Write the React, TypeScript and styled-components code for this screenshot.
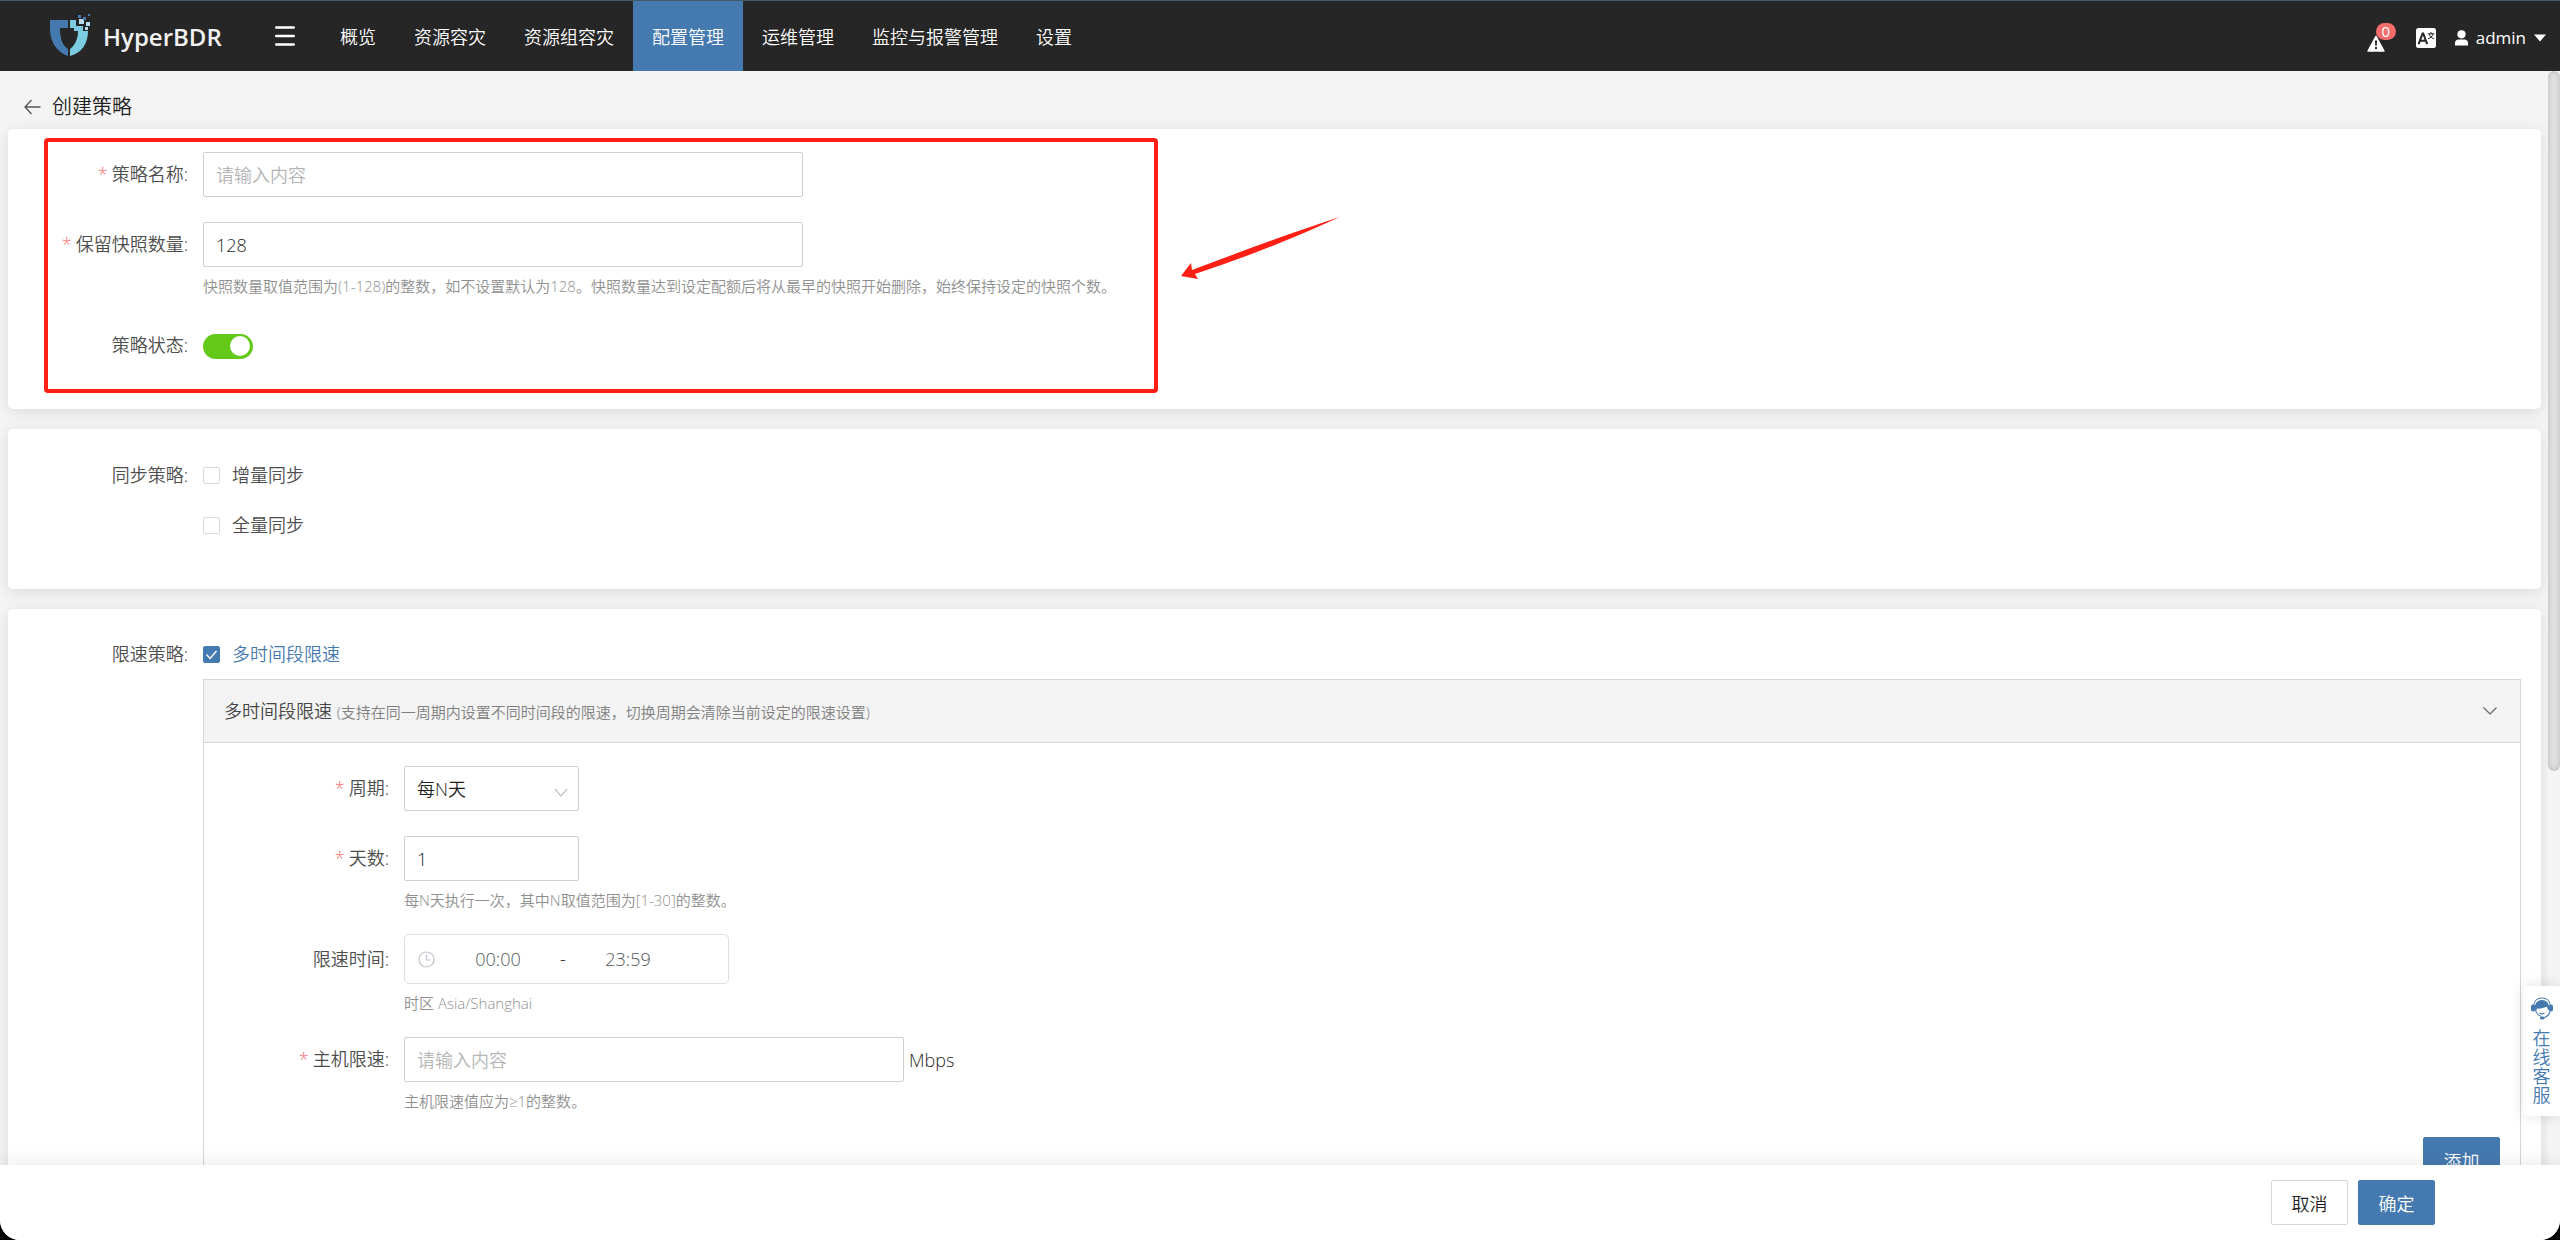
import React, { useState } from "react";
import styled, { createGlobalStyle } from "styled-components";

const color = {
  primary: "#457ab0",
  header: "#262626",
  page: "#f4f4f4",
  text: "#1f1f1f",
  label: "#4d4d4d",
  hint: "#8f8f8f",
  placeholder: "#b5b5b5",
  border: "#cfcfcf",
  line: "#d6d6d6",
  danger: "#f56c6c",
  mark: "#ff1f14",
};

const GlobalStyle = createGlobalStyle`
  *, *::before, *::after { box-sizing: border-box; }
  body {
    margin: 0;
    background: #000;
    color: ${color.text};
    font-family: "Open Sans", "Noto Sans CJK SC", sans-serif;
    font-size: 18px;
    font-weight: 350;
  }
  button, input, select { font: inherit; color: inherit; }
`;

const Shell = styled.div`
  position: relative;
  display: flex;
  flex-direction: column;
  height: 100vh;
  overflow: hidden;
  background: ${color.page};
  border-radius: 0 0 20px 20px;
`;

/* ---------- header ---------- */

const Header = styled.header`
  display: flex;
  align-items: stretch;
  flex: none;
  height: 71px;
  padding: 0 14px 0 48px;
  background: ${color.header};
  border-top: 1px solid #455a64;
  color: #fff;
`;

const Brand = styled.a`
  display: flex;
  align-items: center;
  gap: 9px;
  width: 227px;
  color: #f2f2f2;
  font-size: 24px;
  font-weight: 600;
  text-decoration: none;
`;

const MenuButton = styled.button`
  display: flex;
  align-items: center;
  width: 46px;
  padding: 0;
  background: none;
  border: 0;
`;

const Nav = styled.nav`
  display: flex;
  flex: 1;
`;

const NavLink = styled.a<{ $active?: boolean }>`
  display: flex;
  align-items: center;
  padding: 0 19px;
  background: ${(p) => (p.$active ? color.primary : "transparent")};
  color: #fff;
  text-decoration: none;
`;

const Tools = styled.div`
  display: flex;
  align-items: center;
  gap: 19px;
`;

const ToolButton = styled.button`
  position: relative;
  display: flex;
  align-items: center;
  gap: 8px;
  padding: 4px 0 0;
  background: none;
  border: 0;
  font-size: 17px;
  font-weight: 400;
  line-height: 24px;
`;

const AlarmButton = styled(ToolButton)`
  width: 30px;
  padding-top: 14px;
`;

const Badge = styled.span`
  position: absolute;
  top: 2px;
  left: 9px;
  width: 20px;
  height: 17px;
  border-radius: 9px;
  background: ${color.danger};
  font-size: 15px;
  line-height: 17px;
  text-align: center;
`;

/* ---------- body ---------- */

const Main = styled.main`
  display: flex;
  flex: 1;
  min-height: 0;
`;

const Content = styled.div`
  flex: 1;
  min-width: 0;
  overflow: hidden;
  padding: 0 7px 0 8px;
`;

const ScrollTrack = styled.div`
  flex: none;
  width: 12px;
`;

const ScrollThumb = styled.div`
  height: 64%;
  border-radius: 6px;
  background: #e2e2e2;
  box-shadow: inset 0 0 6px rgba(0, 0, 0, 0.2);
`;

const TitleBar = styled.div`
  display: flex;
  align-items: center;
  gap: 11px;
  height: 58px;
  padding: 13px 0 0 16px;
`;

const BackButton = styled.button`
  display: flex;
  padding: 0;
  background: none;
  border: 0;
`;

const Title = styled.h1`
  margin: 0;
  font-size: 20px;
  font-weight: 350;
  line-height: 28px;
`;

const Cards = styled.div`
  display: flex;
  flex-direction: column;
  gap: 20px;
`;

const Card = styled.section<{ $top?: number }>`
  position: relative;
  padding: ${(p) => p.$top ?? 21}px 20px 39px 0;
  border-radius: 5px;
  background: #fff;
  box-shadow: 0 3px 15px rgba(0, 0, 0, 0.1);
`;

const FormRow = styled.div`
  display: flex;
  align-items: flex-start;

  & + & {
    margin-top: 25px;
  }
`;

const Label = styled.label<{ $h?: number; $w?: number }>`
  flex: none;
  width: ${(p) => p.$w ?? 195}px;
  padding-right: 15px;
  color: ${color.label};
  line-height: ${(p) => p.$h ?? 45}px;
  text-align: right;
`;

const Star = styled.span`
  margin-right: 4px;
  color: ${color.danger};
`;

const Field = styled.div`
  display: flex;
  flex-direction: column;
  align-items: flex-start;
`;

const Inline = styled.div`
  display: flex;
  align-items: center;
  gap: 5px;
`;

const TextInput = styled.input<{ $w: number }>`
  width: ${(p) => p.$w}px;
  height: 45px;
  padding: 0 12px;
  background: #fff;
  border: 1px solid ${color.border};
  border-radius: 2px;

  &::placeholder {
    color: ${color.placeholder};
  }
`;

const Hint = styled.p`
  margin: 10px 0 0;
  color: ${color.hint};
  font-size: 15px;
  line-height: 18px;
`;

const SwitchLine = styled.div`
  display: flex;
  align-items: center;
  height: 50px;
`;

const Switch = styled.input`
  appearance: none;
  display: flex;
  align-items: center;
  width: 50px;
  height: 25px;
  margin: 2px 0 0;
  padding: 0 3px;
  border-radius: 13px;
  background: #bfbfbf;

  &::before {
    content: "";
    width: 20px;
    height: 20px;
    border-radius: 10px;
    background: #fff;
  }

  &:checked {
    justify-content: flex-end;
    background: #64c818;
  }
`;

const CheckLabel = styled.label<{ $on: boolean; $h?: number }>`
  display: flex;
  align-items: center;
  gap: 12px;
  line-height: ${(p) => p.$h ?? 50}px;
  color: ${(p) => (p.$on ? color.primary : color.label)};
`;

const CheckBox = styled.span`
  position: relative;
  display: flex;
  width: 17px;
  height: 17px;
`;

const CheckInput = styled.input`
  appearance: none;
  width: 17px;
  height: 17px;
  margin: 0;
  background: #fff;
  border: 1px solid #d9d9d9;
  border-radius: 2px;

  &:checked {
    background: ${color.primary};
    border-color: ${color.primary};
  }
`;

const CheckMark = styled.svg`
  position: absolute;
  inset: 0;
  pointer-events: none;
`;

const Panel = styled.div`
  margin-left: 195px;
  border: 1px solid ${color.line};
`;

const PanelHead = styled.div`
  display: flex;
  align-items: center;
  height: 63px;
  padding: 0 23px 0 20px;
  background: #f3f3f3;
  border-bottom: 1px solid ${color.line};
`;

const PanelTitle = styled.div`
  flex: 1;
  color: #454545;
  line-height: 62px;
`;

const PanelNote = styled.span`
  color: #808080;
  font-size: 15px;
`;

const PanelBody = styled.div`
  padding: 23px 20px 20px 0;
`;

const PanelActions = styled.div`
  display: flex;
  justify-content: flex-end;
  margin-top: 27px;
`;

const SelectWrap = styled.div`
  position: relative;
  width: 175px;
`;

const SelectBox = styled.select`
  appearance: none;
  width: 100%;
  height: 45px;
  padding: 0 12px;
  background: #fff;
  border: 1px solid ${color.border};
  border-radius: 2px;
`;

const SelectArrow = styled.svg`
  position: absolute;
  top: 22px;
  right: 11px;
  pointer-events: none;
`;

const TimeRange = styled.div`
  display: flex;
  align-items: center;
  width: 325px;
  height: 50px;
  padding: 0 13px;
  border: 1px solid #dcdfe6;
  border-radius: 5px;
  background: #fff;
`;

const TimeInput = styled.input`
  width: 120px;
  height: 40px;
  padding: 0;
  border: 0;
  background: none;
  color: #54565a;
  text-align: center;

  &:first-of-type {
    margin-left: 3px;
  }
`;

const Dash = styled.span`
  width: 10px;
  text-align: center;
`;

const Button = styled.button<{ $primary?: boolean }>`
  width: 77px;
  height: 45px;
  padding: 0;
  background: ${(p) => (p.$primary ? color.primary : "#fff")};
  border: 1px solid ${(p) => (p.$primary ? color.primary : color.line)};
  border-radius: 2px;
  color: ${(p) => (p.$primary ? "#fff" : color.text)};
`;

const Footer = styled.footer`
  position: relative;
  display: flex;
  flex: none;
  align-items: center;
  justify-content: flex-end;
  gap: 10px;
  height: 75px;
  padding-right: 125px;
  background: #fff;
  box-shadow: 0 0 20px rgba(0, 0, 0, 0.1);
`;

/* ---------- overlays ---------- */

const Highlight = styled.div`
  position: absolute;
  top: 9px;
  left: 36px;
  width: 1114px;
  height: 255px;
  border: 4px solid ${color.mark};
  border-radius: 4px;
  pointer-events: none;
`;

const Pointer = styled.svg`
  position: absolute;
  top: 86px;
  left: 1172px;
  pointer-events: none;
`;

const ServiceTab = styled.button`
  position: absolute;
  right: 0;
  bottom: 124px;
  display: flex;
  flex-direction: column;
  align-items: center;
  gap: 9px;
  width: 37px;
  height: 130px;
  padding: 11px 0 0;
  background: #fff;
  border: 0;
  border-radius: 5px 0 0 5px;
  box-shadow: 0 0 15px rgba(0, 0, 0, 0.12);
  color: ${color.primary};
`;

const ServiceText = styled.span`
  width: 18px;
  line-height: 19px;
`;

/* ---------- drawings ---------- */

const ShieldLogo = () => (
  <svg width="46" height="46" viewBox="0 0 46 46" aria-hidden="true">
    <path fill="#457ab0" d="M2 7h18v8h-8c0 10 2 17 8 21v7C8 39 2 28 2 16z" />
    <path fill="#7ccbe0" d="M22 7h6v6h7v5h5c0 12-6 22-18 25v-7c5-4 8-10 8-18h-4v-3h-4z" />
    <path fill="#b9dcec" d="M31 6h5v5h-5zM38 9h4v4h-4zM37 14h3v3h-3z" />
    <path fill="#457ab0" d="M30 2h3v3h-3zM35 4h3v3h-3zM40 1h2v2h-2z" />
  </svg>
);

const MenuIcon = () => (
  <svg width="20" height="20" viewBox="0 0 20 20" aria-hidden="true">
    <path stroke="#fff" strokeWidth="2.4" strokeLinecap="round" d="M1.2 1.5h17.6M1.2 10h17.6M1.2 18.5h17.6" />
  </svg>
);

const AlarmIcon = () => (
  <svg width="18" height="17" viewBox="0 0 18 17" aria-hidden="true">
    <path fill="#fff" stroke="#fff" strokeWidth="1.4" strokeLinejoin="round" d="M9 1.4 17 16H1z" />
    <path fill={color.header} d="M7.9 5.5h2.2l-.4 5.2H8.300zM8 12h2v2H8z" />
  </svg>
);

const LanguageIcon = () => (
  <svg width="20" height="20" viewBox="0 0 20 20" fill="none" aria-hidden="true">
    <rect width="20" height="20" rx="2.500" fill="#fff" />
    <path stroke={color.header} strokeWidth="2" d="M2.600 16.200 6.600 5.500h.6l4 10.700M4.200 12.700h5.500" />
    <path stroke={color.header} strokeWidth="1" d="M11.800 5.800h6.600M15 4v1.800M17 5.800c-.5 2.500-2.400 4.200-5 5M13.200 5.800c.6 2.500 2.500 4.200 5 5" />
  </svg>
);

const UserIcon = () => (
  <svg width="13" height="16" viewBox="0 0 13 16" fill="#fff" aria-hidden="true">
    <circle cx="6.500" cy="4.300" r="4.100" />
    <path d="M0 15.500v-2.500c0-2 1.500-3.500 3.500-3.500h6c2 0 3.500 1.500 3.500 3.500v2.500z" />
  </svg>
);

const CaretIcon = () => (
  <svg width="12" height="8" viewBox="0 0 12 8" aria-hidden="true">
    <path fill="#fff" d="M0 .5h12L6 7.500z" />
  </svg>
);

const BackIcon = () => (
  <svg width="17" height="16" viewBox="0 0 17 16" fill="none" aria-hidden="true">
    <path stroke="#555" strokeWidth="1.300" d="M16.500 8H1M7.500 1 1 8l6.500 7" />
  </svg>
);

const ChevronIcon = () => (
  <svg width="14" height="8" viewBox="0 0 14 8" fill="none" aria-hidden="true">
    <path stroke="#666" strokeWidth="1.200" d="m.5.5 6.500 6.500L13.500.5" />
  </svg>
);

const ClockIcon = () => (
  <svg width="17" height="17" viewBox="0 0 17 17" fill="none" stroke="#c0c4cc" strokeWidth="1.200" aria-hidden="true">
    <circle cx="8.500" cy="8.500" r="7.500" />
    <path d="M8.500 4v5h4" />
  </svg>
);

const AgentIcon = () => (
  <svg width="22" height="23" viewBox="0 0 22 23" aria-hidden="true">
    <path fill="none" stroke={color.primary} strokeWidth="1.200" d="M2.500 9C3 4 6.500 1 11 1s8 3 8.500 8" />
    <path fill={color.primary} d="M4 12c-.8-5.500 2.500-9 7-9s7.800 3.500 7 9l-1 1.500c-.2-2-.8-3-1.600-4C13.500 11 9 12 6 11.500L5 14z" />
    <rect x="0" y="7.500" width="4.200" height="7" rx="2" fill={color.primary} />
    <rect x="17.800" y="7.500" width="4.200" height="7" rx="2" fill={color.primary} />
    <path fill="none" stroke={color.primary} strokeWidth="1.100" d="M4.500 13c.8 3.500 3 5.500 5.500 6.200M19 14.500c-1 3.500-3.500 5.800-7 6.500M8.500 16c1.600 1.200 3.400 1.200 5 0" />
    <rect x="9" y="19.500" width="4.500" height="3" rx="1.500" fill={color.primary} />
  </svg>
);

/* ---------- parts ---------- */

const navItems = ["概览", "资源容灾", "资源组容灾", "配置管理", "运维管理", "监控与报警管理", "设置"];

type FormLabelProps = { id: string; text: string; required?: boolean; height?: number; width?: number };

const FormLabel = ({ id, text, required, height, width }: FormLabelProps) => (
  <Label htmlFor={id} $h={height} $w={width}>
    {required && <Star>*</Star>}
    {text}:
  </Label>
);

type CheckProps = { id: string; text: string; initial?: boolean; height?: number };

const Check = ({ id, text, initial = false, height }: CheckProps) => {
  const [on, setOn] = useState(initial);
  return (
    <CheckLabel htmlFor={id} $on={on} $h={height}>
      <CheckBox>
        <CheckInput id={id} type="checkbox" checked={on} onChange={(e) => setOn(e.target.checked)} />
        {on && (
          <CheckMark width="17" height="17" viewBox="0 0 17 17" fill="none">
            <path stroke="#fff" strokeWidth="1.300" d="m3.500 8.500 3.500 4 6.500-7.500" />
          </CheckMark>
        )}
      </CheckBox>
      {text}
    </CheckLabel>
  );
};

export default function App() {
  return (
    <>
      <GlobalStyle />
      <Shell>
        <Header>
          <Brand href="#">
            <ShieldLogo />
            HyperBDR
          </Brand>
          <MenuButton aria-label="菜单">
            <MenuIcon />
          </MenuButton>
          <Nav>
            {navItems.map((item) => (
              <NavLink key={item} href="#" $active={item === "配置管理"}>
                {item}
              </NavLink>
            ))}
          </Nav>
          <Tools>
            <AlarmButton aria-label="报警">
              <AlarmIcon />
              <Badge>0</Badge>
            </AlarmButton>
            <ToolButton aria-label="语言">
              <LanguageIcon />
            </ToolButton>
            <ToolButton>
              <UserIcon />
              admin
              <CaretIcon />
            </ToolButton>
          </Tools>
        </Header>

        <Main>
          <Content>
            <TitleBar>
              <BackButton aria-label="返回">
                <BackIcon />
              </BackButton>
              <Title>创建策略</Title>
            </TitleBar>

            <Cards>
              <Card $top={23}>
                <FormRow>
                  <FormLabel id="name" text="策略名称" required />
                  <TextInput id="name" $w={600} placeholder="请输入内容" />
                </FormRow>
                <FormRow>
                  <FormLabel id="snapshots" text="保留快照数量" required />
                  <Field>
                    <TextInput id="snapshots" $w={600} defaultValue="128" />
                    <Hint>
                      快照数量取值范围为(1-128)的整数，如不设置默认为128。快照数量达到设定配额后将从最早的快照开始删除，始终保持设定的快照个数。
                    </Hint>
                  </Field>
                </FormRow>
                <FormRow>
                  <FormLabel id="status" text="策略状态" height={50} />
                  <SwitchLine>
                    <Switch id="status" type="checkbox" role="switch" defaultChecked />
                  </SwitchLine>
                </FormRow>
                <Highlight />
                <Pointer width="162" height="66" viewBox="0 0 162 66">
                  <path fill={color.mark} d="M1 61 11 48l1 7C60 37 110 18 160 2 112 24 64 43 15 59l3 5z" />
                </Pointer>
              </Card>

              <Card>
                <FormRow>
                  <FormLabel id="incremental" text="同步策略" height={50} />
                  <Field>
                    <Check id="incremental" text="增量同步" />
                    <Check id="full" text="全量同步" />
                  </Field>
                </FormRow>
              </Card>

              <Card>
                <FormRow>
                  <FormLabel id="limit" text="限速策略" height={49} />
                  <Check id="limit" text="多时间段限速" initial height={49} />
                </FormRow>
                <Panel>
                  <PanelHead>
                    <PanelTitle>
                      多时间段限速{" "}
                      <PanelNote>(支持在同一周期内设置不同时间段的限速，切换周期会清除当前设定的限速设置)</PanelNote>
                    </PanelTitle>
                    <BackButton aria-label="收起">
                      <ChevronIcon />
                    </BackButton>
                  </PanelHead>
                  <PanelBody>
                    <FormRow>
                      <FormLabel id="period" text="周期" required width={200} />
                      <SelectWrap>
                        <SelectBox id="period" defaultValue="n">
                          <option value="n">每N天</option>
                        </SelectBox>
                        <SelectArrow width="14" height="9" viewBox="0 0 14 9" fill="none">
                          <path stroke="#c0c4cc" strokeWidth="1.300" d="m1 1 6 7 6-7" />
                        </SelectArrow>
                      </SelectWrap>
                    </FormRow>
                    <FormRow>
                      <FormLabel id="days" text="天数" required width={200} />
                      <Field>
                        <TextInput id="days" $w={175} defaultValue="1" />
                        <Hint>每N天执行一次，其中N取值范围为[1-30]的整数。</Hint>
                      </Field>
                    </FormRow>
                    <FormRow>
                      <FormLabel id="start" text="限速时间" height={50} width={200} />
                      <Field>
                        <TimeRange>
                          <ClockIcon />
                          <TimeInput id="start" defaultValue="00:00" />
                          <Dash>-</Dash>
                          <TimeInput aria-label="结束时间" defaultValue="23:59" />
                        </TimeRange>
                        <Hint>时区 Asia/Shanghai</Hint>
                      </Field>
                    </FormRow>
                    <FormRow>
                      <FormLabel id="rate" text="主机限速" required width={200} />
                      <Field>
                        <Inline>
                          <TextInput id="rate" $w={500} placeholder="请输入内容" />
                          Mbps
                        </Inline>
                        <Hint>主机限速值应为≥1的整数。</Hint>
                      </Field>
                    </FormRow>
                    <PanelActions>
                      <Button $primary>添加</Button>
                    </PanelActions>
                  </PanelBody>
                </Panel>
              </Card>
            </Cards>
          </Content>
          <ScrollTrack>
            <ScrollThumb />
          </ScrollTrack>
        </Main>

        <Footer>
          <Button>取消</Button>
          <Button $primary>确定</Button>
        </Footer>

        <ServiceTab>
          <AgentIcon />
          <ServiceText>在线客服</ServiceText>
        </ServiceTab>
      </Shell>
    </>
  );
}
